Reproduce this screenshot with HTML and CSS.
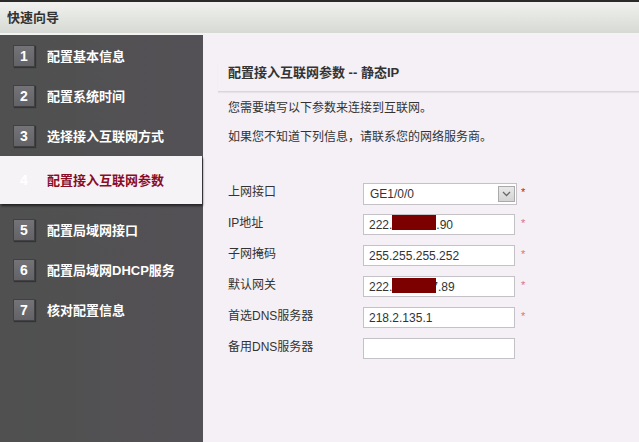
FILE: index.html
```html
<!DOCTYPE html>
<html lang="zh-CN">
  <head>
    <meta charset="UTF-8" />
    <meta name="viewport" content="width=device-width, initial-scale=1.0" />
    <title>快速向导</title>
    <link rel="stylesheet" href="styles.css">
  </head>
  <body>
    <!-- 标题栏 -->
    <div class="header">快速向导</div>

    <div class="main">
      <!-- 步骤 -->
      <ul class="steps">
        <li class="step"><span class="num">1</span><span class="label">配置基本信息</span></li>
        <li class="step"><span class="num">2</span><span class="label">配置系统时间</span></li>
        <li class="step"><span class="num">3</span><span class="label">选择接入互联网方式</span></li>
        <li class="step active"><span class="num">4</span><span class="label">配置接入互联网参数</span></li>
        <li class="step"><span class="num">5</span><span class="label">配置局域网接口</span></li>
        <li class="step"><span class="num">6</span><span class="label">配置局域网DHCP服务</span></li>
        <li class="step"><span class="num">7</span><span class="label">核对配置信息</span></li>
      </ul>

      <!-- 内容 -->
      <div class="content">
        <h2 class="title">配置接入互联网参数 -- 静态IP</h2>
        <p class="desc">您需要填写以下参数来连接到互联网。</p>
        <p class="desc">如果您不知道下列信息，请联系您的网络服务商。</p>

        <div class="form">
          <div class="row">
            <div class="row-label">上网接口</div>
            <div class="select">
              <span>GE1/0/0</span>
              <span class="arrow">
                <svg width="9" height="6" viewBox="0 0 9 6"><path d="M1 1l3.5 3.5L8 1" fill="none" stroke="#6a6a6a" stroke-width="1.3"/></svg>
              </span>
            </div>
            <span class="req req-strong">*</span>
          </div>
          <div class="row">
            <div class="row-label">IP地址</div>
            <div class="field">222.<span class="mask"></span>.90</div>
            <span class="req">*</span>
          </div>
          <div class="row">
            <div class="row-label">子网掩码</div>
            <div class="field">255.255.255.252</div>
            <span class="req">*</span>
          </div>
          <div class="row">
            <div class="row-label">默认网关</div>
            <div class="field">222.<span class="mask mask-over"></span>7.89</div>
            <span class="req">*</span>
          </div>
          <div class="row">
            <div class="row-label">首选DNS服务器</div>
            <div class="field">218.2.135.1</div>
            <span class="req">*</span>
          </div>
          <div class="row">
            <div class="row-label">备用DNS服务器</div>
            <div class="field"></div>
          </div>
        </div>
      </div>
    </div>
  </body>
</html>
```

FILE: styles.css
```css
html,
body {
  padding: 0;
  margin: 0;
  height: 100%;
}

body {
  overflow: hidden;
  background-color: #f4f0f5;
  color: #333;
  font: 12px/1 'Liberation Sans', 'Noto Sans CJK SC', sans-serif;
}

/* 标题栏 */
.header {
  height: 31px;
  line-height: 31px;
  padding-left: 7px;
  border-top: 2px solid #2b2c2a;
  border-bottom: 2px solid #f3f3f3;
  background: linear-gradient(to bottom, #f1f2ef, #d6d9d4);
  font-size: 13px;
  font-weight: bold;
  color: #333;
}

.main {
  display: flex;
  height: calc(100% - 35px);
}

/* 步骤 */
.steps {
  width: 203px;
  flex-shrink: 0;
  margin: 0;
  padding: 1px 0 0;
  list-style: none;
  background: linear-gradient(to right, #4f504f, #545156);
}

.step {
  height: 40px;
  display: flex;
  align-items: center;
  padding-left: 13px;
}

.step > .num {
  width: 20px;
  height: 20px;
  line-height: 20px;
  text-align: center;
  background: linear-gradient(to bottom, #747377, #636266);
  border: 1px solid #414042;
  box-shadow: 1px 1px 1px rgba(0, 0, 0, 0.35);
  color: #fff;
  font-size: 14px;
  font-weight: bold;
}

.step > .label {
  margin-left: 12px;
  color: #fff;
  font-size: 13px;
  font-weight: bold;
}

.step.active {
  height: 48px;
  margin: 0 1px 6px 0;
  background-color: #f6f3f7;
  box-shadow: 1px 2px 2px rgba(0, 0, 0, 0.55);
}

.step.active > .num {
  background: none;
  border-color: transparent;
  box-shadow: none;
  color: #fff;
}

.step.active > .label {
  color: #8a0d27;
}

/* 内容 */
.content {
  flex: 1;
  padding-left: 15px;
}

.title {
  margin: 28px 0 0;
  padding: 0 0 8px 10px;
  height: 20px;
  line-height: 20px;
  font-size: 13px;
  font-weight: bold;
  color: #333;
  border-bottom: 1px solid #d9d6db;
  box-shadow: 0 1px 1px #e7e4e9;
}

.desc {
  margin: 6px 0 9px 10px;
  line-height: 20px;
}

.desc + .desc {
  margin-top: 0;
}

.form {
  margin: 31px 0 0 10px;
}

.row {
  height: 31px;
  display: flex;
  align-items: center;
}

.row-label {
  width: 135px;
  margin-top: -3px;
}

.field,
.select {
  box-sizing: border-box;
  display: flex;
  align-items: center;
  height: 21px;
  width: 152px;
  padding-left: 5px;
  background-color: #fff;
  border: 1px solid #c4c2c6;
}

.select {
  width: 154px;
  height: 22px;
  padding-left: 6px;
  justify-content: space-between;
}

.select > .arrow {
  box-sizing: border-box;
  width: 17px;
  height: 16px;
  margin-right: 1px;
  display: flex;
  align-items: center;
  justify-content: center;
  background: linear-gradient(to bottom, #e8e8e8, #d4d4d4);
  border: 1px solid #aaa;
}

/* 遮挡块 */
.mask {
  align-self: flex-start;
  width: 44px;
  height: 15px;
  background-color: #7d0000;
}

.mask-over {
  position: relative;
  z-index: 1;
  margin: 1px -5px 0 0;
}

.req {
  margin-left: 6px;
  margin-top: -3px;
  color: #e0707a;
  font-size: 11px;
}

.req-strong {
  margin-left: 4px;
  color: #c8102e;
}
```
